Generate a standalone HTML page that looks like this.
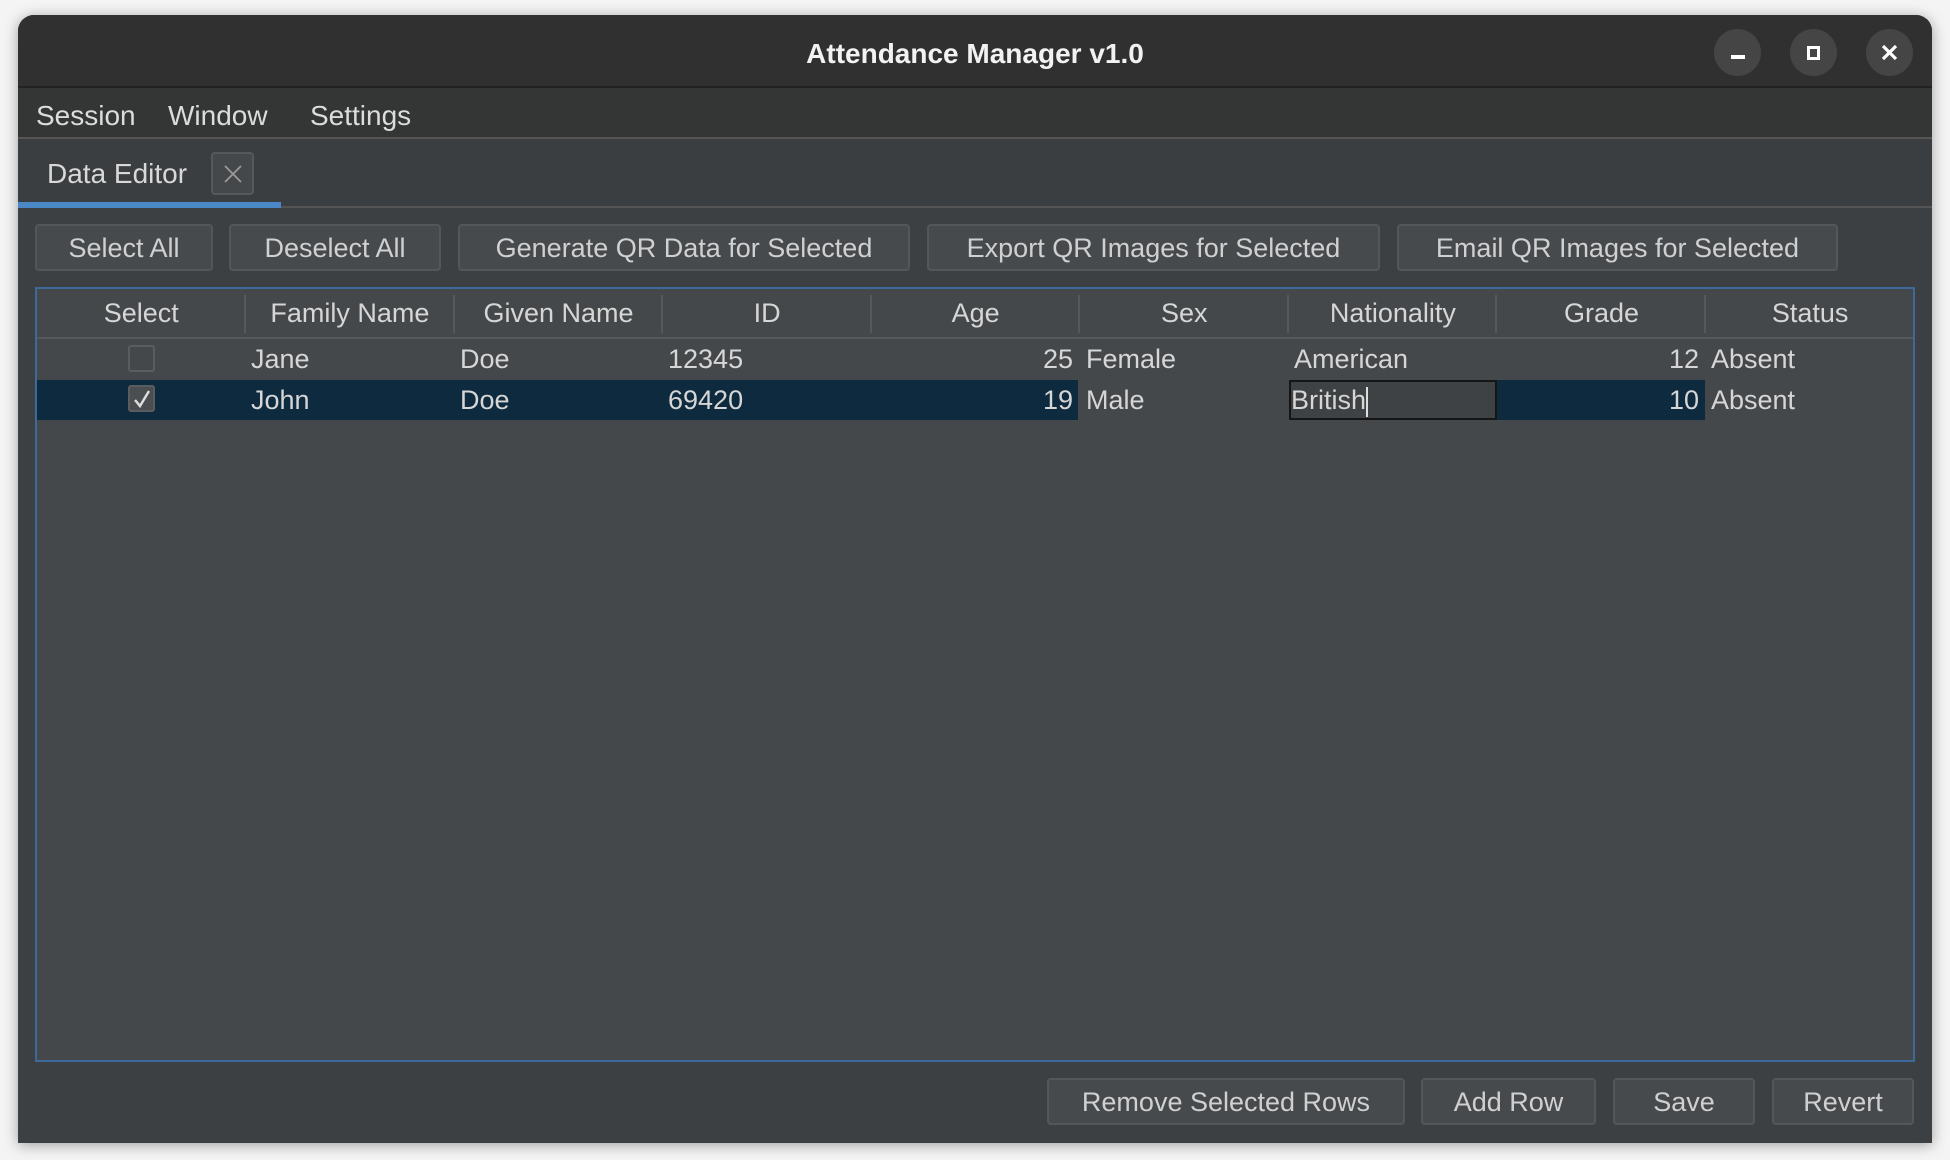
<!DOCTYPE html>
<html><head><meta charset="utf-8"><style>
*{box-sizing:border-box;margin:0;padding:0}
body{width:1950px;height:1160px;background:#f4f4f4;font-family:"Liberation Sans",sans-serif;position:relative;overflow:hidden;color:#d6d6d6;font-size:27px}
.win{position:absolute;left:18px;top:15px;width:1914px;height:1128px;background:#3d4042;border-radius:16px 16px 0 0;overflow:hidden;box-shadow:0 2px 14px rgba(0,0,0,.35)}
.a{position:absolute}
.title{left:0;top:0;width:1914px;height:73px;background:#303030;border-bottom:2px solid #222}
.title .t{position:absolute;left:0;width:100%;top:23px;text-align:center;font-weight:bold;color:#f2f2f2;font-size:28px}
.cb{position:absolute;top:14px;width:47px;height:47px;border-radius:50%;background:#454545}
.menu{left:0;top:73px;width:1914px;height:51px;background:#343535;border-bottom:2px solid #555}
.menu span{position:absolute;top:12px;font-size:28px;color:#dcdcdc}
.tabs{left:0;top:124px;width:1914px;height:69px;background:#3b3e40;border-bottom:2px solid #555}
.btn{position:absolute;height:47px;background:#474a4d;border:2px solid #545759;border-radius:4px;color:#d0d0d0;text-align:center;line-height:44px;font-size:27px}
.tbl{position:absolute;left:17px;top:272px;width:1880px;height:775px;background:#45484a;border:2px solid #3d6a9a}
.hd{position:absolute;top:0;height:50px;border-bottom:2px solid #56595b;width:100%}
.hc{position:absolute;top:0;height:48px;line-height:49px;text-align:center;width:208.6px}
.sep{position:absolute;top:6px;width:2px;height:38px;background:#56595b}
.c{position:absolute;height:40px;line-height:40px;font-size:27px;white-space:nowrap}
.chk{position:absolute;width:27px;height:27px;border:2px solid #5a5d60;border-radius:3px;background:#45484a}
</style></head><body>
<div class="win">
 <div class="a title"><div class="t">Attendance Manager v1.0</div>
  <div class="cb" style="left:1696px"><div class="a" style="left:17px;top:26px;width:14px;height:4px;background:#fff"></div></div>
  <div class="cb" style="left:1772px"><div class="a" style="left:17px;top:17px;width:13px;height:14px;border:3px solid #fff"></div></div>
  <div class="cb" style="left:1848px"><svg class="a" style="left:14px;top:14px" width="19" height="19" viewBox="0 0 19 19"><path d="M3 3L16 16M16 3L3 16" stroke="#fff" stroke-width="3.2"/></svg></div>
 </div>
 <div class="a menu"><span style="left:18px">Session</span><span style="left:150px">Window</span><span style="left:292px">Settings</span></div>
 <div class="a tabs">
  <span class="a" style="left:29px;top:19px;font-size:28px;color:#d8d8d8">Data Editor</span>
  <div class="a" style="left:193px;top:13px;width:43px;height:43px;border:2px solid #56595b;border-radius:4px;background:#45484a"><svg class="a" style="left:10px;top:10px" width="20" height="20"><path d="M2 2L18 18M18 2L2 18" stroke="#999" stroke-width="1.8"/></svg></div>
  <div class="a" style="left:0;top:63px;width:263px;height:6px;background:#4a88c7"></div>
 </div>
 <div class="btn" style="left:17px;top:209px;width:178px">Select All</div>
 <div class="btn" style="left:211px;top:209px;width:212px">Deselect All</div>
 <div class="btn" style="left:440px;top:209px;width:452px">Generate QR Data for Selected</div>
 <div class="btn" style="left:909px;top:209px;width:453px">Export QR Images for Selected</div>
 <div class="btn" style="left:1379px;top:209px;width:441px">Email QR Images for Selected</div>
 <div class="tbl">
  <div class="hd">
   <div class="hc" style="left:0">Select</div><div class="sep" style="left:207px"></div>
   <div class="hc" style="left:208.6px">Family Name</div><div class="sep" style="left:416px"></div>
   <div class="hc" style="left:417.2px">Given Name</div><div class="sep" style="left:624px"></div>
   <div class="hc" style="left:625.8px">ID</div><div class="sep" style="left:833px"></div>
   <div class="hc" style="left:834.4px">Age</div><div class="sep" style="left:1041px"></div>
   <div class="hc" style="left:1043px">Sex</div><div class="sep" style="left:1250px"></div>
   <div class="hc" style="left:1251.6px">Nationality</div><div class="sep" style="left:1458px"></div>
   <div class="hc" style="left:1460.2px">Grade</div><div class="sep" style="left:1667px"></div>
   <div class="hc" style="left:1668.8px">Status</div>
  </div>
  <div class="chk" style="left:91px;top:56px"></div>
  <div class="c" style="left:214px;top:50px">Jane</div>
  <div class="c" style="left:423px;top:50px">Doe</div>
  <div class="c" style="left:631px;top:50px">12345</div>
  <div class="c" style="left:834px;top:50px;width:202px;text-align:right">25</div>
  <div class="c" style="left:1049px;top:50px">Female</div>
  <div class="c" style="left:1257px;top:50px">American</div>
  <div class="c" style="left:1460px;top:50px;width:202px;text-align:right">12</div>
  <div class="c" style="left:1674px;top:50px">Absent</div>
  <div class="a" style="left:0;top:91px;width:1041px;height:40px;background:#0d2a3f"></div>
  <div class="a" style="left:1459px;top:91px;width:209px;height:40px;background:#0d2a3f"></div>
  <div class="chk" style="left:91px;top:96px;background:#4b4e50"><svg class="a" style="left:3px;top:2px" width="18" height="20"><path d="M2 11L7 17L16 2" stroke="#ddd" stroke-width="2.4" fill="none"/></svg></div>
  <div class="c" style="left:214px;top:91px">John</div>
  <div class="c" style="left:423px;top:91px">Doe</div>
  <div class="c" style="left:631px;top:91px">69420</div>
  <div class="c" style="left:834px;top:91px;width:202px;text-align:right">19</div>
  <div class="c" style="left:1049px;top:91px">Male</div>
  <div class="a" style="left:1252px;top:91px;width:208px;height:40px;border:2px solid #151515;background:#3f4244"></div>
  <div class="c" style="left:1254px;top:91px">British<span style="display:inline-block;width:2px;height:30px;background:#ddd;vertical-align:middle"></span></div>
  <div class="c" style="left:1460px;top:91px;width:202px;text-align:right">10</div>
  <div class="c" style="left:1674px;top:91px">Absent</div>
 </div>
 <div class="btn" style="left:1029px;top:1063px;width:358px">Remove Selected Rows</div>
 <div class="btn" style="left:1403px;top:1063px;width:175px">Add Row</div>
 <div class="btn" style="left:1595px;top:1063px;width:142px">Save</div>
 <div class="btn" style="left:1754px;top:1063px;width:142px">Revert</div>
</div>
</body></html>
